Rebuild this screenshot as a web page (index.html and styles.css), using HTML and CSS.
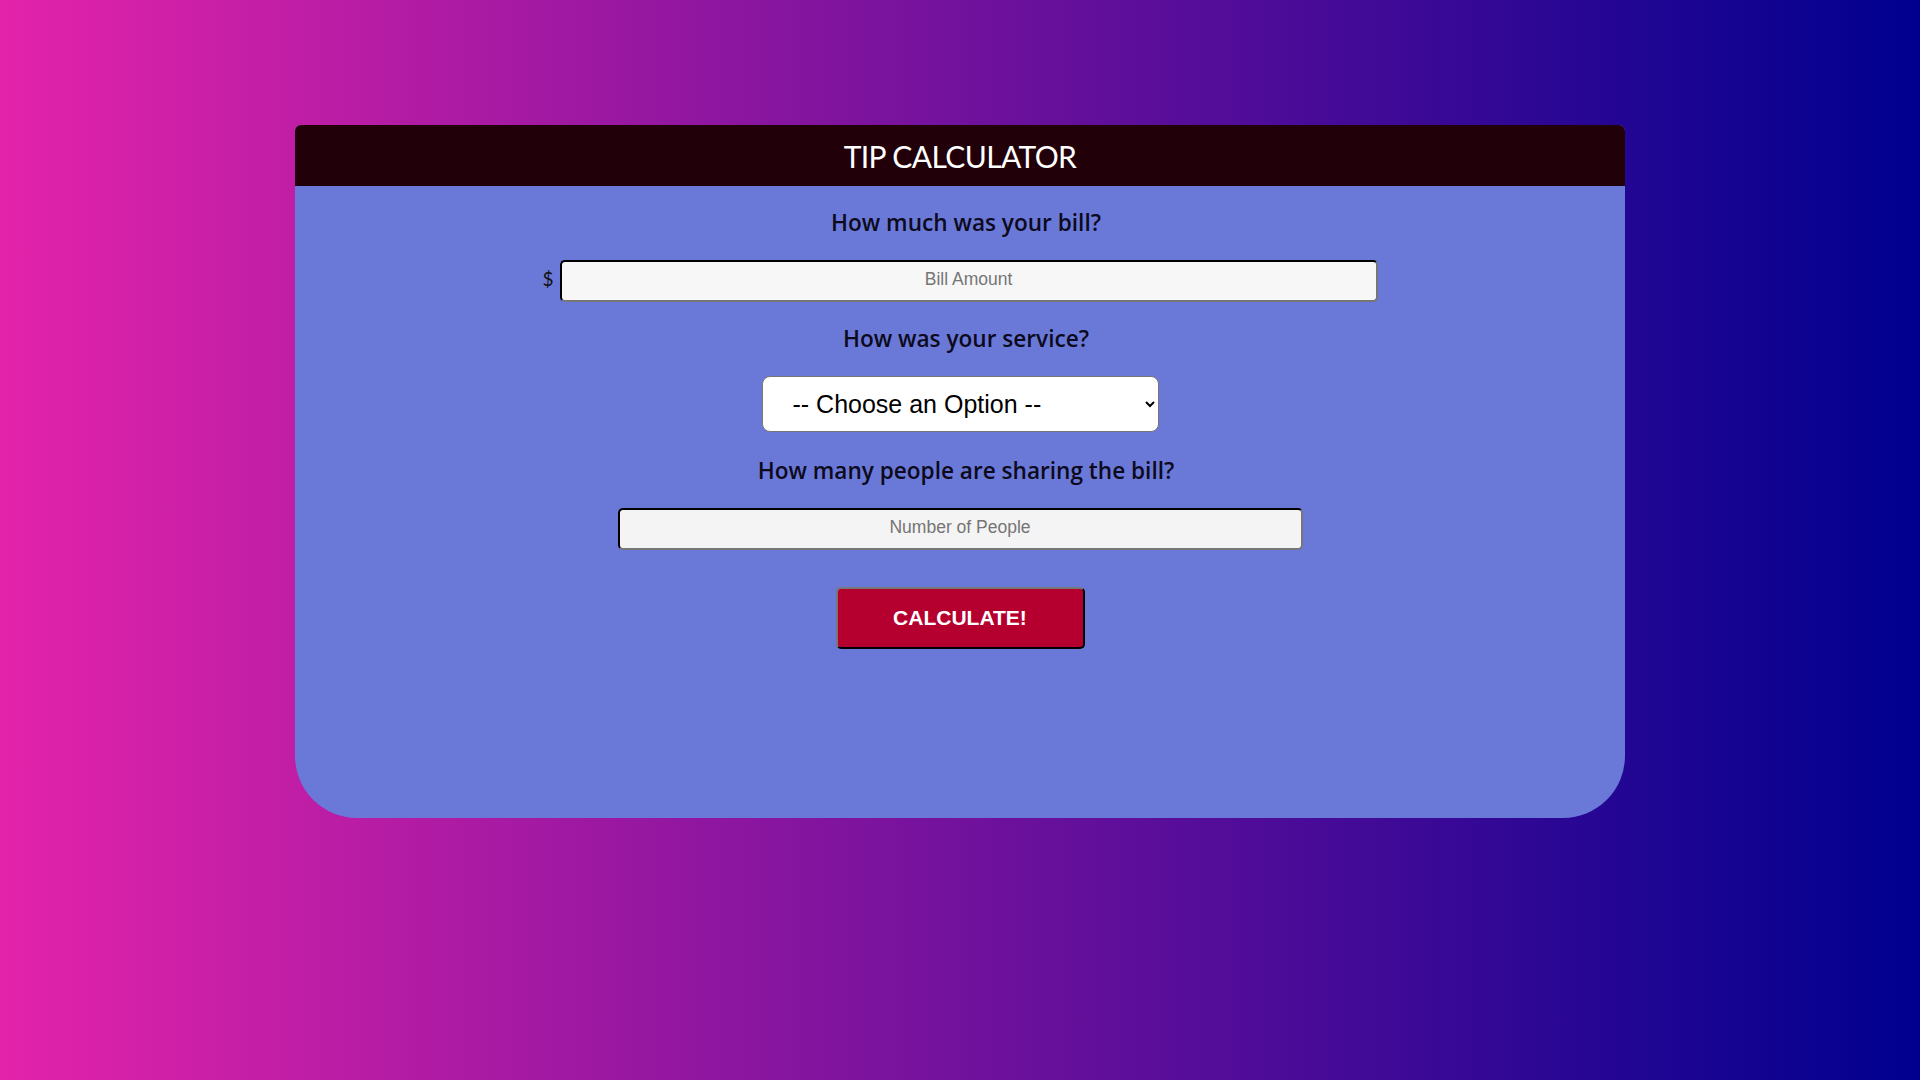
FILE: index.html
```html
<!DOCTYPE html>
<html lang="en">
<head>
<meta charset="utf-8">
<title>Tip Calculator</title>
<link rel="stylesheet" href="styles.css">
</head>
<body>
  <div class="card">
    <div class="card-header">
      <h1 class="title">TIP CALCULATOR</h1>
    </div>
    <div class="card-body">
      <p class="question">How much was your bill?</p>
      <div class="bill-row">
        <span class="dollar">$</span>
        <input class="field field-bill" type="text" placeholder="Bill Amount">
      </div>
      <p class="question">How was your service?</p>
      <select class="service">
        <option>-- Choose an Option --</option>
        <option>30% - Outstanding</option>
        <option>20% - Good</option>
        <option>15% - It was OK</option>
        <option>10% - Bad</option>
        <option>5% - Terrible</option>
      </select>
      <p class="question">How many people are sharing the bill?</p>
      <input class="field field-people" type="text" placeholder="Number of People">
      <button class="calc-btn" type="button">CALCULATE!</button>
    </div>
  </div>
</body>
</html>
```
FILE: styles.css
```css
* { box-sizing: border-box; }

html, body {
  margin: 0;
  padding: 0;
}

body {
  min-height: 100vh;
  background: linear-gradient(to right, #e323aa 0%, #00008f 100%);
  font-family: "Lato", "DejaVu Sans", sans-serif;
  padding-top: 125px;
}

.card {
  width: 1330px;
  height: 693px;
  margin: 0 auto;
  background: #6a79d8;
  border-radius: 6px 6px 62px 62px;
  overflow: hidden;
}

.card-header {
  height: 61px;
  background: #210009;
  display: flex;
  align-items: center;
  justify-content: center;
}

.title {
  margin: 0;
  color: #ffffff;
  font-family: "Lato", "DejaVu Sans", sans-serif;
  font-weight: 400;
  font-size: 30px;
  line-height: 36px;
  letter-spacing: -0.6px;
}

.card-body {
  display: flex;
  flex-direction: column;
  align-items: center;
  padding-top: 23px;
}

.question {
  margin: 0;
  padding-left: 12px;
  font-family: "Open Sans", "Lato", sans-serif;
  font-size: 22.6px;
  line-height: 28px;
  font-weight: 600;
  color: #0c0a1c;
}

.bill-row {
  display: flex;
  align-items: center;
  gap: 6px;
  margin-top: 23px;
  margin-bottom: 23px;
}

.dollar {
  font-size: 19px;
  line-height: 19px;
  margin-top: -6px;
  color: #111;
}

.field {
  height: 42px;
  border: 2px inset #767676;
  border-top-color: #222;
  border-left-color: #222;
  border-right-color: #767676;
  border-bottom-color: #767676;
  border-radius: 5px;
  background: #f7f7f7;
  font-family: "Liberation Sans", Arial, sans-serif;
  font-size: 17.5px;
  text-align: center;
  color: #222;
  padding: 0 0 3px 0;
}

.field::placeholder {
  color: #757575;
}

.field-bill {
  width: 818px;
}

.field-people {
  width: 685px;
  background: #f4f4f4;
  margin-top: 23px;
}

.service {
  width: 397px;
  height: 56px;
  margin-top: 23px;
  margin-bottom: 25px;
  padding: 0 10px 0 26px;
  border: 1px solid #767676;
  border-radius: 8px;
  background: #ffffff;
  font-family: "Liberation Sans", Arial, sans-serif;
  font-size: 25px;
  color: #000;
}

.calc-btn {
  width: 249px;
  height: 62px;
  margin-top: 37px;
  background: #b5002f;
  color: #ffffff;
  font-family: "Liberation Sans", Arial, sans-serif;
  font-weight: 700;
  font-size: 21px;
  border: 2px outset #767676;
  border-top-color: #777;
  border-left-color: #777;
  border-right-color: #222;
  border-bottom-color: #222;
  border-radius: 5px;
}
```
